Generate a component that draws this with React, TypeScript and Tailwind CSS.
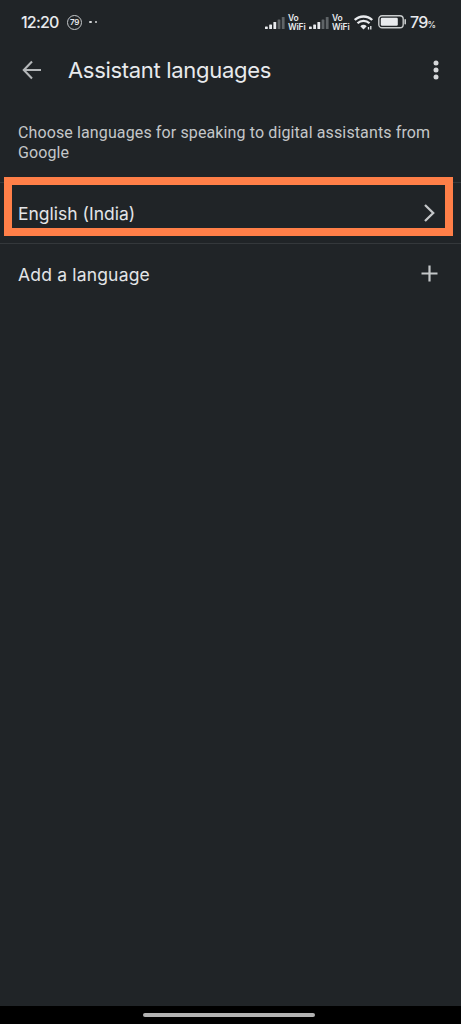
function SignalBars() {
  return (
    <svg width="20" height="13" viewBox="0 0 20 13" className="mt-[3px] shrink-0">
      <rect x="0" y="9.5" width="2.8" height="2.5" rx="0.6" fill="#e8eaed" />
      <rect x="4.2" y="7.5" width="2.8" height="4.5" rx="0.6" fill="#e8eaed" />
      <rect x="8.4" y="5" width="2.8" height="7" rx="0.6" fill="#e8eaed" />
      <rect x="12.6" y="2.5" width="2.8" height="9.5" rx="0.6" fill="#5f6467" />
      <rect x="16.8" y="0" width="2.8" height="12" rx="0.6" fill="#5f6467" />
    </svg>
  );
}

function VoWifi() {
  return (
    <div className="w-[18px] shrink-0 pt-px text-[8.5px] font-semibold tracking-[-0.1px] text-[#e8eaed]">
      <div className="h-[9px] leading-[9px]">Vo</div>
      <div className="h-[9px] leading-[9px]">WiFi</div>
    </div>
  );
}

function WifiIcon() {
  return (
    <svg width="20" height="15" viewBox="0 0 20 15" fill="none" className="shrink-0">
      <path d="M0.8 5a12.5 12.5 0 0 1 17.4 0" stroke="#e8eaed" strokeWidth="2.4" />
      <path d="M3.5 8.3a8.6 8.6 0 0 1 12 0" stroke="#e8eaed" strokeWidth="2.3" />
      <path d="M6.3 11.2a4.8 4.8 0 0 1 6.4 0L9.5 14.6z" fill="#e8eaed" />
      <path d="M14.5 12v2.4M16.8 11v3.4" stroke="#e8eaed" strokeWidth="1.3" />
    </svg>
  );
}

function BatteryIcon() {
  return (
    <svg width="29" height="14" viewBox="0 0 29 14" fill="none" className="shrink-0">
      <rect x="0.8" y="0.8" width="24.4" height="11.9" rx="3.3" stroke="#c9cccd" strokeWidth="1.4" />
      <rect x="2.8" y="2.8" width="17" height="7.9" rx="1.3" fill="#e8eaed" />
      <path d="M27.2 4.8v4" stroke="#c9cccd" strokeWidth="1.6" strokeLinecap="round" />
    </svg>
  );
}

function StatusBar() {
  return (
    <div className="flex h-11 items-center pl-[21px] pr-[25px]">
      <span className="w-[46px] text-[16px] font-medium tracking-[-0.8px] text-[#e8eaed]">12:20</span>
      <div className="flex size-[15px] items-center justify-center rounded-full border-[1.5px] border-[#c4c7c9] text-[8px] font-semibold tracking-[-0.4px] text-[#e8eaed]">
        79
      </div>
      <div className="ml-[7px] flex gap-[3px]">
        <span className="size-[2.5px] rounded-full bg-[#d5d7d9]" />
        <span className="size-[2.5px] rounded-full bg-[#d5d7d9]" />
      </div>
      <div className="ml-auto flex items-center">
        <SignalBars />
        <div className="ml-[3px] mr-[3px]">
          <VoWifi />
        </div>
        <SignalBars />
        <div className="ml-[3px] mr-[4px]">
          <VoWifi />
        </div>
        <WifiIcon />
        <div className="ml-[4px]">
          <BatteryIcon />
        </div>
        <span className="ml-[3px] text-[16px] font-medium tracking-[-0.7px] text-[#e8eaed]">
          79<span className="text-[8.5px] tracking-normal">%</span>
        </span>
      </div>
    </div>
  );
}

export default function App() {
  return (
    <main className="flex h-[1024px] w-[461px] flex-col overflow-hidden bg-[#202427] font-['Inter',sans-serif]">
      <StatusBar />

      {/* App bar */}
      <header className="flex h-[52px] items-center pl-[22px] pr-[22px]">
        <svg width="20" height="20" viewBox="0 0 20 20" fill="none" stroke="#b4b7b9" strokeWidth="2.1">
          <path d="M19 10H2M10 1.6L1.8 10l8.2 8.4" />
        </svg>
        <h1 className="ml-[26px] whitespace-nowrap text-[22px] leading-7 tracking-[-0.31px] text-[#e8eaed]">
          Assistant languages
        </h1>
        <svg width="6" height="20" viewBox="0 0 6 20" fill="#d5d7d9" className="ml-auto">
          <circle cx="3" cy="3" r="2.5" />
          <circle cx="3" cy="10" r="2.5" />
          <circle cx="3" cy="17" r="2.5" />
        </svg>
      </header>

      <p className="h-[86px] whitespace-nowrap px-[18px] pt-[27px] font-['Roboto',sans-serif] text-[16px] leading-5 tracking-[0.12px] text-[#c4c7c9]">
        Choose languages for speaking to digital assistants from
        <br />
        Google
      </p>

      {/* Selected language, outlined by the highlight */}
      <button className="relative flex h-[62px] items-center justify-between border-y border-[#34383b] pl-[18px] pr-[25px] text-left">
        <span className="absolute left-1 -top-[6px] h-[59px] w-[449px] border-8 border-[#ff7f48]" />
        <span className="pt-0.5 text-[17.5px] text-[#e3e5e7]">English (India)</span>
        <svg width="12" height="18" viewBox="0 0 12 18" fill="none" stroke="#c4c7c9" strokeWidth="2.3">
          <path d="M1 1l8.2 8L1 17" />
        </svg>
      </button>

      <button className="flex h-[60px] items-center justify-between pl-[18px] pr-[23px] text-left">
        <span className="pt-0.5 text-[17.5px] tracking-[0.18px] text-[#e3e5e7]">Add a language</span>
        <svg width="17" height="17" viewBox="0 0 17 17" stroke="#c4c7c9" strokeWidth="2.2" className="-mt-0.5">
          <path d="M8.5 0.5v16M0.5 8.5h16" />
        </svg>
      </button>

      {/* System gesture bar */}
      <div className="mt-auto flex h-[18px] justify-center bg-black pt-[7px]">
        <div className="mr-[3px] h-1 w-[172px] rounded-full bg-[#b3b3b3]" />
      </div>
    </main>
  );
}
